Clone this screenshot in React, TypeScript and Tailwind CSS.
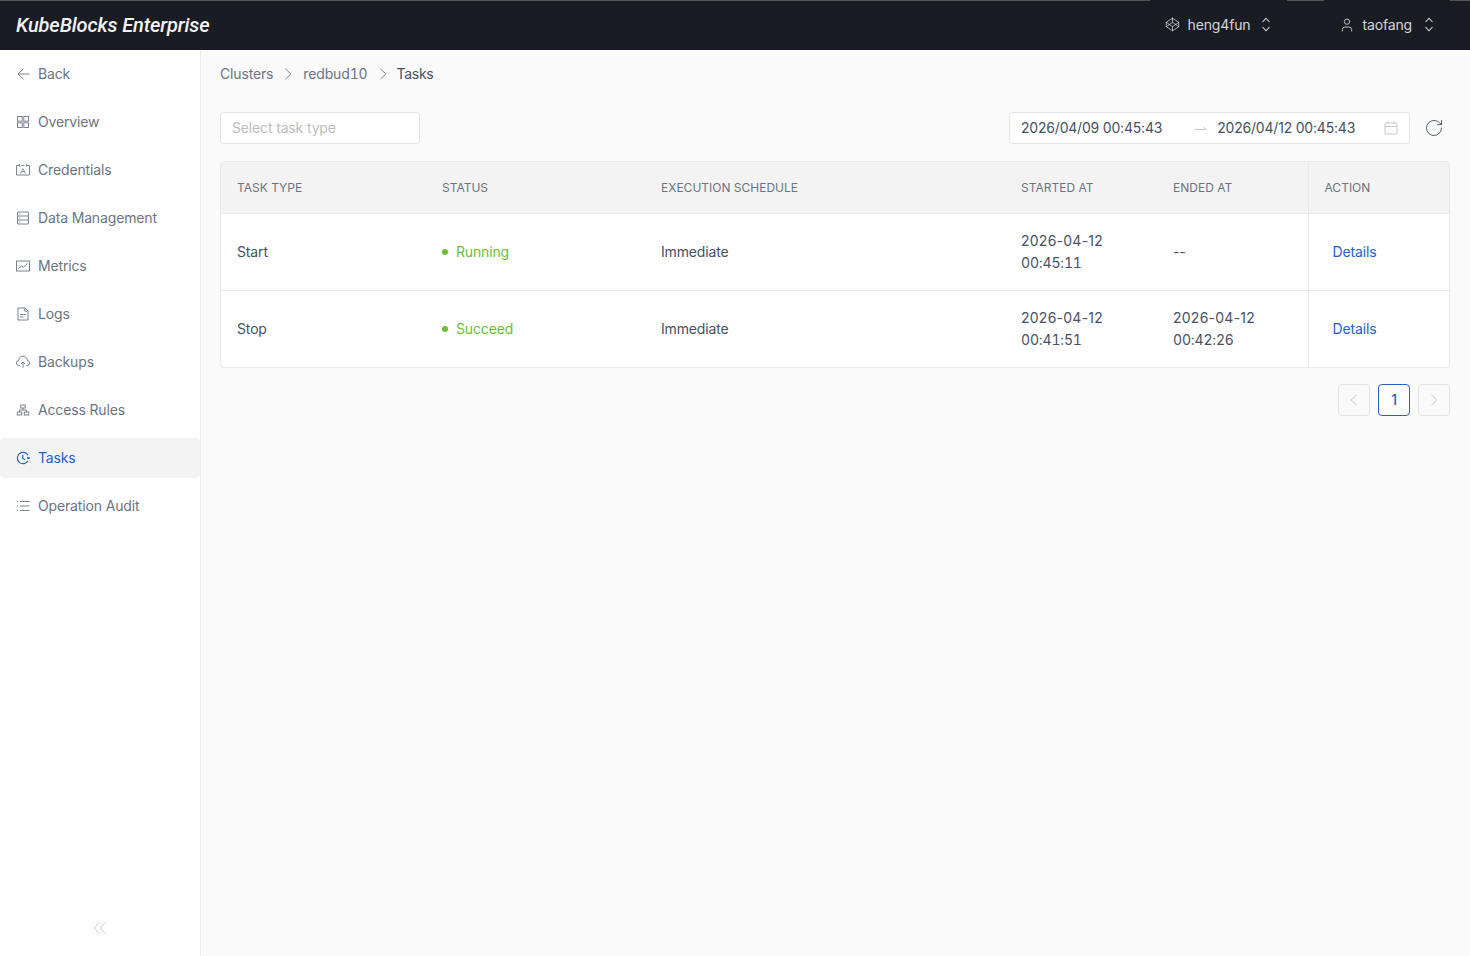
import { Codepen, RotateCw, User } from 'lucide-react';
import type { ReactNode } from 'react';

const font = { fontFamily: 'Inter, "Liberation Sans", sans-serif' };
const logoFont = { fontFamily: 'Roboto, Inter, sans-serif' };

function Svg({ children, size = 14, width = 1 }: { children: ReactNode; size?: number; width?: number }) {
  return (
    <svg width={size} height={size} viewBox="0 0 14 14" fill="none" stroke="currentColor" strokeWidth={width}>
      {children}
    </svg>
  );
}

const iconBack = (
  <Svg>
    <path d="M7.500 1.800 2 7l5.500 5.200M2 7h11.500" />
  </Svg>
);
const iconOverview = (
  <Svg>
    <rect x="1.500" y="1.500" width="4.700" height="4.700" />
    <rect x="7.800" y="1.500" width="4.700" height="4.700" />
    <rect x="1.500" y="7.800" width="4.700" height="4.700" />
    <rect x="7.800" y="7.800" width="4.700" height="4.700" />
  </Svg>
);
const iconCredentials = (
  <Svg>
    <path d="M3.500 2.500H.5v9.500h13V2.500h-3M5.500 2.500h3M3.500 1.200v2.300M10.500 1.200v2.300" />
    <path d="M4.800 10 7 5.600 9.200 10M5.600 8.500h2.800M4.300 10h1.200M8.500 10h1.200" strokeWidth="0.800" />
  </Svg>
);
const iconData = (
  <Svg>
    <rect x="1.500" y="1" width="11" height="12" rx="0.500" />
    <path d="M1.500 5h11M1.500 9h11M3.500 3h.9M3.500 7h.9M3.500 11h.9" />
  </Svg>
);
const iconMetrics = (
  <Svg>
    <rect x="0.500" y="2" width="13" height="10" />
    <path d="m2.500 9.800 3-3 2 1.500 4-4" />
  </Svg>
);
const iconLogs = (
  <Svg>
    <path d="M2 1h7l3 3v9H2zM8.800 1v3.200H12M4 7.500h6M4 10h3.500" />
  </Svg>
);
const iconBackups = (
  <Svg>
    <path d="M3.800 10.500H3a2.500 2.500 0 0 1-.3-5 4.300 4.300 0 0 1 8.600 0 2.500 2.500 0 0 1-.3 5h-.8M7 12.800V7M5 9l2-2 2 2" />
  </Svg>
);
const iconAccess = (
  <Svg>
    <rect x="4.800" y="2" width="4.400" height="3" />
    <rect x="1.300" y="9" width="4.400" height="3" />
    <rect x="8.300" y="9" width="4.400" height="3" />
    <path d="M7 5v2M3.500 9V7h7v2" />
  </Svg>
);
const iconTasks = (
  <Svg width={1.200}>
    <path d="M12 4.200A5.700 5.700 0 1 0 12 9.800" />
    <path d="M6.800 3.800V7.200l2.200 1.500" />
    <path d="m11.200 6.300 2.300.7-2.300.7" />
  </Svg>
);
const iconAudit = (
  <Svg>
    <path d="M3.800 2.500H13.500M3.800 7H13.500M3.800 11.500H13.500M.8 2.500h1.200M.8 7h1.200M.8 11.500h1.200" />
  </Svg>
);

const menu = [
  { label: 'Back', icon: iconBack },
  { label: 'Overview', icon: iconOverview },
  { label: 'Credentials', icon: iconCredentials },
  { label: 'Data Management', icon: iconData },
  { label: 'Metrics', icon: iconMetrics },
  { label: 'Logs', icon: iconLogs },
  { label: 'Backups', icon: iconBackups },
  { label: 'Access Rules', icon: iconAccess },
  { label: 'Tasks', icon: iconTasks, active: true },
  { label: 'Operation Audit', icon: iconAudit },
];

const rows = [
  { type: 'Start', status: 'Running', started: ['2026-04-12', '00:45:11'], ended: null },
  { type: 'Stop', status: 'Succeed', started: ['2026-04-12', '00:41:51'], ended: ['2026-04-12', '00:42:26'] },
];

function Chevron({ left = false }: { left?: boolean }) {
  return (
    <Svg>
      <path d={left ? 'M9.500 1.800 4.200 7l5.300 5.200' : 'M4.500 1.800 9.800 7l-5.300 5.200'} />
    </Svg>
  );
}

function UpDown() {
  return (
    <svg width="10" height="15" viewBox="0 0 10 15" fill="none" stroke="#d4d5d8" strokeWidth="1.100">
      <path d="M1.500 5 5 1.200 8.500 5M1.500 10 5 13.800 8.500 10" />
    </svg>
  );
}

function DateTime({ value }: { value: string[] }) {
  return (
    <>
      <span className="tracking-[0.25px]">{value[0]}</span>
      <br />
      <span className="tabular-nums">{value[1]}</span>
    </>
  );
}

function Header() {
  return (
    <header className="flex shrink-0 flex-col bg-[#1a1c24]">
      <div className="flex h-px">
        <span className="flex-1 bg-[#55565a]" />
        <span className="w-[137px]" />
        <span className="w-[37px] bg-[#55565a]" />
        <span className="w-[126px]" />
        <span className="w-5 bg-[#55565a]" />
      </div>
      <div className="flex h-[49px] items-center justify-between pb-[2px] pl-4 pr-9">
        <span className="text-[20px] font-medium italic tracking-[-0.12px] text-[#f2f2f2]" style={logoFont}>
          KubeBlocks Enterprise
        </span>
        <div className="flex items-center text-sm text-[#d4d5d8]">
          <Codepen size={15} strokeWidth={1.200} className="mr-[8px]" />
          <span>heng4fun</span>
          <span className="ml-[11px] mr-[68px]">
            <UpDown />
          </span>
          <User size={16} strokeWidth={1.300} className="mr-[7px]" />
          <span>taofang</span>
          <span className="ml-3">
            <UpDown />
          </span>
        </div>
      </div>
    </header>
  );
}

function Sidebar() {
  return (
    <aside className="flex w-[201px] shrink-0 flex-col justify-between border-r border-[#ececee] bg-white pt-1">
      <nav className="flex flex-col gap-2">
        {menu.map((item) => (
          <div
            key={item.label}
            className={`flex h-10 items-center gap-2 rounded-[4px] pl-4 text-sm ${
              item.active ? 'bg-[#f3f3f4] text-[#2461c9]' : 'text-[#6b7482]'
            }`}
          >
            <span className={item.active ? 'text-[#2461c9]' : 'text-[#7b8391]'}>{item.icon}</span>
            <span>{item.label}</span>
          </div>
        ))}
      </nav>
      <div className="flex h-[56px] items-center justify-center text-[#c6c9cf]">
        <svg width="14" height="14" viewBox="0 0 14 14" fill="none" stroke="currentColor">
          <path d="M6.500 1.500 1.200 7l5.300 5.500M12.500 1.500 7.200 7l5.300 5.500" />
        </svg>
      </div>
    </aside>
  );
}

function Toolbar() {
  return (
    <div className="mt-[28px] flex items-center justify-between">
      <div className="flex h-8 w-[200px] items-center rounded-[4px] border border-[#e4e5e8] bg-white px-[11px] text-sm text-[#bdbdbd]">
        Select task type
      </div>
      <div className="flex items-center">
        <div className="flex h-8 w-[401px] items-center rounded-[4px] border border-[#e4e5e8] bg-white pl-[11px] pr-[10px] text-sm tracking-[-0.2px] text-[#465164]">
          <span>2026/04/09 00:45:43</span>
          <svg width="12" height="6" viewBox="0 0 12 6" fill="none" stroke="#c4c6cb" className="ml-[33px] mr-[10px]">
            <path d="M0 4.500h11.500L8.500 2" />
          </svg>
          <span>2026/04/12 00:45:43</span>
          <svg width="16" height="16" viewBox="0 0 16 16" fill="none" stroke="#c4c6cb" className="ml-auto">
            <rect x="2" y="3" width="12" height="11" rx="0.500" />
            <path d="M2 6.500h12M5 1.500V4M11 1.500V4" />
          </svg>
        </div>
        <RotateCw size={20} strokeWidth={1.100} className="ml-[14px] mr-[6px] text-[#465164]" />
      </div>
    </div>
  );
}

function TaskTable() {
  const th = 'h-[51px] border-b border-[#e8e9ec] pl-4 pt-[2px] text-left text-xs font-normal tracking-normal text-[#6b7482]';
  const td = 'h-[77px] pl-4 leading-[22px]';
  return (
    <div className="mt-[17px] overflow-hidden rounded-[4px] border border-[#e8e9ec] bg-white">
      <table className="w-full table-fixed border-collapse text-sm text-[#465164]">
        <colgroup>
          <col className="w-[205px]" />
          <col className="w-[219px]" />
          <col className="w-[360px]" />
          <col className="w-[152px]" />
          <col className="w-[151px]" />
          <col />
        </colgroup>
        <thead>
          <tr className="bg-[#f3f3f4]">
            <th className={th}>TASK TYPE</th>
            <th className={th}>STATUS</th>
            <th className={th}>EXECUTION SCHEDULE</th>
            <th className={th}>STARTED AT</th>
            <th className={th}>ENDED AT</th>
            <th className={`${th} border-l`}>ACTION</th>
          </tr>
        </thead>
        <tbody>
          {rows.map((row, index) => (
            <tr key={row.type} className={index > 0 ? 'border-t border-[#e8e9ec]' : ''}>
              <td className={td}>{row.type}</td>
              <td className={td}>
                <span className="flex items-center gap-2 text-[#6cbf35]">
                  <span className="h-[6px] w-[6px] rounded-full bg-[#6cbf35]" />
                  {row.status}
                </span>
              </td>
              <td className={td}>Immediate</td>
              <td className={td}>
                <DateTime value={row.started} />
              </td>
              <td className={td}>{row.ended ? <DateTime value={row.ended} /> : '--'}</td>
              <td className={`${td} border-l border-[#e8e9ec] pl-6 text-[#2461c9]`}>Details</td>
            </tr>
          ))}
        </tbody>
      </table>
    </div>
  );
}

function Pagination() {
  const box = 'flex h-8 w-8 items-center justify-center rounded-[4px] border';
  return (
    <div className="mt-4 flex justify-end gap-2">
      <div className={`${box} border-[#e4e5e8] text-[#c4c6cb]`}>
        <Chevron left />
      </div>
      <div className={`${box} border-[#2461c9] bg-white text-sm font-medium text-[#2461c9]`}>1</div>
      <div className={`${box} border-[#e4e5e8] text-[#c4c6cb]`}>
        <Chevron />
      </div>
    </div>
  );
}

export default function App() {
  return (
    <div className="flex h-[956px] flex-col overflow-hidden bg-[#fafafa] tracking-[-0.15px]" style={font}>
      <Header />
      <div className="flex min-h-0 flex-1">
        <Sidebar />
        <main className="flex-1 pl-[19px] pr-5 pt-[14px]">
          <div className="flex h-5 items-center text-sm text-[#6b7482]">
            <span>Clusters</span>
            <span className="mx-2 text-[#7b8391]">
              <Chevron />
            </span>
            <span className="tabular-nums">redbud10</span>
            <span className="ml-2 mr-[7px] text-[#7b8391]">
              <Chevron />
            </span>
            <span className="tracking-[-0.3px] text-[#465164]">Tasks</span>
          </div>
          <Toolbar />
          <TaskTable />
          <Pagination />
        </main>
      </div>
    </div>
  );
}
